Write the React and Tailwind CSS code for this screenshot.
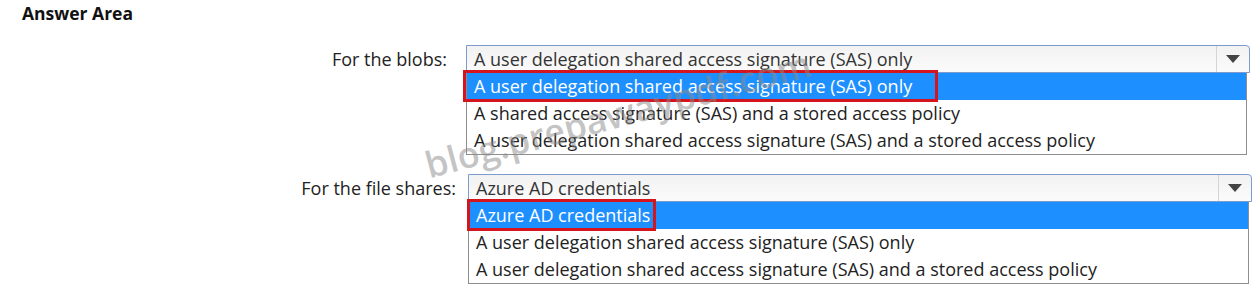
import React from 'react'

const font = { fontFamily: '"Open Sans", "Noto Sans", sans-serif' }

const Caret = () => (
  <svg width="14" height="8" viewBox="0 0 14 8">
    <path d="M0 0 L14 0 L7 8 Z" fill="#444" />
  </svg>
)

const Dropdown = ({ value, options, redWidth, redLeft }) => {
  return (
    <div className="flex flex-col w-[784px]">
      <div className="flex h-[28px] border border-[#7d9ccb] rounded-tr-[4px] bg-gradient-to-b from-[#f2f2f2] to-[#fbfbfb]">
        <div className="flex-1 pl-[7px] text-[18px] leading-[26px] text-[#333] overflow-hidden whitespace-nowrap">{value}</div>
        <div className="w-[33px] border-l border-[#d4d4d4] flex items-center justify-center">
          <Caret />
        </div>
      </div>
      <div className="w-[781px] border border-t-0 border-[#8e8e8e] bg-white">
        {options.map((opt, i) => (
          <div
            key={i}
            className={
              i === 0
                ? 'relative h-[27px] bg-[#1e8fff] text-white pl-[7px] text-[18px] leading-[26px] whitespace-nowrap'
                : 'h-[27px] pl-[7px] text-[18px] leading-[26px] text-[#222] whitespace-nowrap'
            }
          >
            {opt}
            {i === 0 && (
              <div
                className="absolute top-[-3px] h-[32px] border-[3px] border-[#d5151d]"
                style={{ width: redWidth, left: redLeft }}
              />
            )}
          </div>
        ))}
      </div>
    </div>
  )
}

export default function App() {
  return (
    <div className="relative w-[1259px] h-[298px] bg-white text-[#222] overflow-hidden" style={font}>
      <div className="pl-[22px] pt-[2px] text-[17.5px] font-bold leading-[22px] text-[#111]">Answer Area</div>

      <div className="flex mt-[21px]">
        <div className="w-[447px] text-right text-[18px] leading-[28px]">For the blobs:</div>
        <div className="ml-[19px]">
          <Dropdown
            value="A user delegation shared access signature (SAS) only"
            options={[
              'A user delegation shared access signature (SAS) only',
              'A shared access signature (SAS) and a stored access policy',
              'A user delegation shared access signature (SAS) and a stored access policy',
            ]}
            redWidth="475px"
            redLeft="-4px"
          />
        </div>
      </div>

      <div className="flex mt-[19px]">
        <div className="w-[456px] text-right text-[18px] leading-[28px]">For the file shares:</div>
        <div className="ml-[12px]">
          <Dropdown
            value="Azure AD credentials"
            options={[
              'Azure AD credentials',
              'A user delegation shared access signature (SAS) only',
              'A user delegation shared access signature (SAS) and a stored access policy',
            ]}
            redWidth="189px"
            redLeft="-2px"
          />
        </div>
      </div>

      <div className="absolute left-[426px] top-[146px] -rotate-[15deg] origin-left text-[36px] leading-[40px] font-semibold text-[#8a8a8a]/50 pointer-events-none whitespace-nowrap">
        blog.prepawaypdf.com
      </div>
    </div>
  )
}
